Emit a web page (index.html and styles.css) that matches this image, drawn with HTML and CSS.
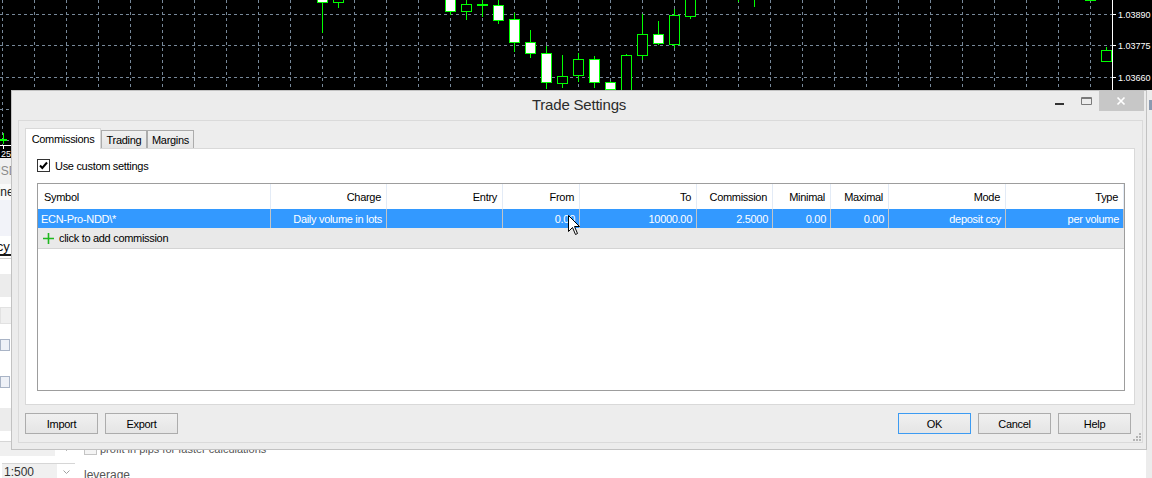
FILE: index.html
```html
<!DOCTYPE html>
<html lang="en">

<head>
    <meta charset="UTF-8">
    <meta name="viewport" content="width=device-width, initial-scale=1.0">
    <title>Trade Settings</title>
    <link rel="stylesheet" href="styles.css">
</head>

<body>
    <div class="terminal">
        <svg class="chart" width="1152" height="158" viewBox="0 0 1152 158">
            <rect width="1152" height="158" fill="#000" />
            <path class="grid-lines" d="M2.5 0V145 M34.5 0V145 M66.5 0V145 M98.5 0V145 M130.5 0V145 M162.5 0V145 M194.5 0V145 M226.5 0V145 M258.5 0V145 M290.5 0V145 M322.5 0V145 M354.5 0V145 M386.5 0V145 M418.5 0V145 M450.5 0V145 M482.5 0V145 M514.5 0V145 M546.5 0V145 M578.5 0V145 M610.5 0V145 M642.5 0V145 M674.5 0V145 M706.5 0V145 M738.5 0V145 M770.5 0V145 M802.5 0V145 M834.5 0V145 M866.5 0V145 M898.5 0V145 M930.5 0V145 M962.5 0V145 M994.5 0V145 M1026.5 0V145 M1058.5 0V145 M1090.5 0V145 M0 14.5H1112 M0 45.5H1112 M0 77.5H1112 M0 109.5H1112 M0 140.5H1112" />

            <!-- candles -->
            <g class="wicks">
                <path d="M322.5 0V33 M338.5 0V8 M450.5 0V15 M466.5 0V20 M482.5 0V17 M498.5 0V24 M514.5 13V52 M530.5 30V58 M546.5 46V89 M562.5 55V88 M578.5 53V82 M594.5 56V88 M610.5 81V90 M626.5 54V90 M642.5 14V60 M658.5 21V45 M674.5 9V48 M690.5 0V19 M738.5 0V2 M754.5 0V7 M1106.5 47V50 M3.5 133V144" />
            </g>
            <g class="bull">
                <rect x="317.5" y="-5" width="10" height="7.5" />
                <rect x="445.5" y="-5" width="10" height="16.5" />
                <rect x="493.5" y="5.5" width="10" height="15" />
                <rect x="509.5" y="19.5" width="10" height="23" />
                <rect x="525.5" y="42.5" width="10" height="11" />
                <rect x="541.5" y="53.5" width="10" height="29" />
                <rect x="589.5" y="59.5" width="10" height="23" />
                <rect x="605.5" y="82.5" width="10" height="7" />
                <rect x="653.5" y="34.5" width="10" height="9" />
                <rect x="1085.5" y="-5" width="10" height="5.5" />
            </g>
            <g class="bear">
                <rect x="333.5" y="-5" width="10" height="7.5" />
                <rect x="461.5" y="4.5" width="10" height="7" />
                <rect x="557.5" y="76.5" width="10" height="7" />
                <rect x="573.5" y="59.5" width="10" height="16" />
                <rect x="621.5" y="55.5" width="10" height="40" />
                <rect x="637.5" y="34.5" width="10" height="21" />
                <rect x="669.5" y="15.5" width="10" height="29" />
                <rect x="685.5" y="-5" width="10" height="21.5" />
                <rect x="1101.5" y="50.5" width="10" height="11" />
            </g>
            <rect x="477" y="4" width="11" height="2" fill="#00ff00" />
            <rect x="0" y="139" width="7" height="2" fill="#00ff00" />

            <!-- axes -->
            <path class="axis" d="M1112.5 0V145.5 M0 145.5H1112.5 M1112 14.5H1116 M1112 45.5H1116 M1112 77.5H1116 M3.5 145V149" />
            <text class="price" x="1118" y="18">1.03890</text>
            <text class="price" x="1118" y="49">1.03775</text>
            <text class="price" x="1118" y="81">1.03660</text>
            <text class="price" x="1" y="157">25 Jan 2017</text>
            <rect x="1146" y="90" width="6" height="68" fill="#ededed" />
            <rect x="1149" y="100" width="3" height="10" fill="#8a9ab0" />
        </svg>

        <div class="lower">
            <div class="lw lw-tabs"><span class="clip-word tab-word">USD</span></div>
            <div class="lw lw-head"><span class="clip-word head-word">Line</span></div>
            <div class="lw lw-tint"></div>
            <div class="lw lw-under"><span class="clip-word under-word">Currency</span></div>
            <div class="lw lw-gap"></div>
            <div class="lw lw-band"></div>
            <div class="lw lw-gap-sm"></div>
            <div class="lw lw-input"><span class="field"></span></div>
            <div class="lw lw-gap-md"></div>
            <div class="lw lw-icon"><span class="mini-cal"></span></div>
            <div class="lw lw-gap-lg"></div>
            <div class="lw lw-icon"><span class="mini-cal"></span></div>
            <div class="lw lw-gap-lg short"></div>
            <div class="lw lw-band"></div>
            <div class="lw lw-gap-sm"></div>
            <div class="lw form-row row-profit">
                <div class="combo disabled">
                    <svg class="chev" width="7" height="4" viewBox="0 0 7 4"><path d="M0.5 0.5L3.5 3.5L6.5 0.5" /></svg>
                </div>
                <span class="bg-check"></span>
                <span class="bg-label">profit in pips for faster calculations</span>
            </div>
            <div class="lw form-row row-leverage">
                <div class="combo">
                    <span class="combo-text">1:500</span>
                    <svg class="chev" width="7" height="4" viewBox="0 0 7 4"><path d="M0.5 0.5L3.5 3.5L6.5 0.5" /></svg>
                </div>
                <span class="bg-label">leverage</span>
            </div>
        </div>

        <div class="dialog">
            <div class="titlebar">
                <div></div>
                <div class="title">Trade Settings</div>
                <div class="win-buttons">
                    <span class="wb">
                        <svg width="26" height="20" viewBox="0 0 26 20"><rect x="8" y="12" width="9" height="2" fill="#333" /></svg>
                    </span>
                    <span class="wb">
                        <svg width="26" height="20" viewBox="0 0 26 20"><path d="M8.5 6.5H18.5V13.5H8.5Z M8.5 7.5H18.5" fill="none" stroke="#7a7a7a" /></svg>
                    </span>
                    <span class="wb wb-close">
                        <svg width="45" height="20" viewBox="0 0 45 20"><path d="M18.5 6.5L25.5 13.5 M25.5 6.5L18.5 13.5" stroke="#fff" stroke-width="1.7" /></svg>
                    </span>
                </div>
            </div>

            <div class="client">
                <div class="tabs">
                    <div class="tab active">Commissions</div>
                    <div class="tab">Trading</div>
                    <div class="tab">Margins</div>
                </div>

                <div class="tab-panel">
                    <label class="custom">
                        <span class="checkbox">
                            <svg width="11" height="11" viewBox="0 0 11 11"><path d="M2 5.5L4.3 8L9 2.5" fill="none" stroke="#000" stroke-width="2" /></svg>
                        </span>
                        Use custom settings
                    </label>

                    <div class="table">
                        <div class="row head">
                            <div class="cell left">Symbol</div>
                            <div class="cell">Charge</div>
                            <div class="cell">Entry</div>
                            <div class="cell">From</div>
                            <div class="cell">To</div>
                            <div class="cell">Commission</div>
                            <div class="cell">Minimal</div>
                            <div class="cell">Maximal</div>
                            <div class="cell">Mode</div>
                            <div class="cell">Type</div>
                        </div>
                        <div class="row selected">
                            <div class="cell left">ECN-Pro-NDD\*</div>
                            <div class="cell">Daily volume in lots</div>
                            <div class="cell"></div>
                            <div class="cell">0.00</div>
                            <div class="cell">10000.00</div>
                            <div class="cell">2.5000</div>
                            <div class="cell">0.00</div>
                            <div class="cell">0.00</div>
                            <div class="cell">deposit ccy</div>
                            <div class="cell">per volume</div>
                        </div>
                        <div class="add-row">
                            <svg width="11" height="11" viewBox="0 0 11 11"><path d="M5.5 0V11 M0 5.5H11" stroke="#1fb81f" stroke-width="1.6" /></svg>
                            click to add commission
                        </div>
                    </div>
                </div>

                <div class="buttons">
                    <button>Import</button>
                    <button>Export</button>
                    <span class="spacer"></span>
                    <button class="default">OK</button>
                    <button>Cancel</button>
                    <button>Help</button>
                </div>

                <svg class="grip" width="8" height="8" viewBox="0 0 8 8">
                    <rect x="6" y="0" width="2" height="2" />
                    <rect x="3" y="3" width="2" height="2" />
                    <rect x="6" y="3" width="2" height="2" />
                    <rect x="0" y="6" width="2" height="2" />
                    <rect x="3" y="6" width="2" height="2" />
                    <rect x="6" y="6" width="2" height="2" />
                </svg>
            </div>
        </div>

        <svg class="cursor" width="13" height="20" viewBox="0 0 13 20">
            <path d="M0.5 0.5V16.5L4.5 12.5L7.5 19.5L9.5 18.5L6.5 11.5H11.5Z" fill="#fff" stroke="#000" />
        </svg>
    </div>
</body>

</html>
```

FILE: styles.css
```css
body {
    margin: 0px;
    font-family: "Liberation Sans", Arial, sans-serif;
    font-size: 11px;
    color: #000;
}

.terminal {
    position: relative;
    display: flex;
    flex-direction: column;
    width: 1152px;
    height: 478px;
    overflow: hidden;
    background-color: #fff;
}

/* chart window behind the dialog */

.chart {
    display: block;
    flex: none;
}

.chart .grid-lines {
    fill: none;
    stroke: #778899;
    stroke-width: 1;
    stroke-dasharray: 3 3;
}

.chart .wicks path {
    fill: none;
    stroke: #00ff00;
    stroke-width: 1;
}

.chart .bull rect {
    fill: #fff;
    stroke: #00ff00;
}

.chart .bear rect {
    fill: #000;
    stroke: #00ff00;
}

.chart .axis {
    fill: none;
    stroke: #fff;
}

.chart .price {
    fill: #fff;
    font-family: "Liberation Sans", Arial, sans-serif;
    font-size: 9px;
}

/* settings form behind the dialog */

.lower {
    display: flex;
    flex: 1;
    flex-direction: column;
    border-right: 6px solid #ececec;
}

.lw {
    flex: none;
    display: flex;
    align-items: center;
    overflow: hidden;
    white-space: nowrap;
}

.clip-word {
    font-size: 12px;
}

.lw-tabs {
    height: 26px;
    background-color: #f0f0f0;
    color: #8a8a8a;
}

.tab-word {
    margin-left: -8px;
}

.lw-head {
    height: 16px;
    background-color: #fafafa;
    color: #222;
}

.head-word {
    margin-left: -9px;
}

.lw-tint {
    height: 36px;
    background-color: #f2f3f9;
}

.lw-under {
    height: 18px;
    border-bottom: 2px solid #1a1a1a;
    color: #111;
    align-items: flex-end;
}

.under-word {
    margin-left: -43px;
    font-size: 13px;
    line-height: 14px;
}

.lw-gap {
    height: 15px;
    border-top: 1px solid #cfcfcf;
    margin-top: 2px;
}

.lw-band {
    height: 23px;
    background-color: #ececec;
}

.lw-gap-sm {
    height: 10px;
}

.lw-gap-md {
    height: 13px;
}

.lw-gap-lg {
    height: 22px;
}

.lw-gap-lg.short {
    height: 19px;
}

.lw-input {
    height: 17px;
}

.lw-input .field {
    width: 80px;
    height: 15px;
    background-color: #f0f0f0;
    border: 1px solid #e2e2e2;
}

.lw-icon {
    height: 15px;
}

.mini-cal {
    width: 8px;
    height: 10px;
    border: 1px solid #a9b4c6;
    background-color: #eef1f7;
}

.form-row {
    gap: 9px;
}

.row-profit {
    height: 17px;
    align-items: flex-start;
}

.row-profit .combo {
    width: 75px;
    height: 15px;
    background-color: #ececec;
}

.row-leverage {
    height: 20px;
    margin-top: 2px;
    padding-left: 2px;
    align-items: flex-end;
}

.combo {
    display: flex;
    align-items: center;
    justify-content: space-between;
    box-sizing: border-box;
    width: 73px;
    height: 17px;
    padding: 0px 5px 0px 2px;
    background: linear-gradient(to right, #f0f0f0 55px, #fff 55px);
    border-top: 1px solid #d6d6d6;
}

.combo.disabled {
    justify-content: flex-end;
}

.combo-text {
    font-size: 12px;
    color: #333;
}

.chev path {
    fill: none;
    stroke: #a0a0a0;
}

.bg-check {
    width: 11px;
    height: 11px;
    margin-left: 0px;
    border: 1px solid #c4c4c4;
    background-color: #f4f4f4;
    margin-top: 1px;
}

.bg-label {
    font-size: 11px;
    color: #555;
    margin-left: -6px;
}

.row-profit .bg-label {
    margin-top: 2px;
}

.row-leverage .bg-label {
    margin-left: 0px;
    font-size: 12px;
    line-height: 12px;
    margin-bottom: -1px;
}

/* dialog window */

.dialog {
    position: absolute;
    left: 11px;
    top: 90px;
    display: flex;
    flex-direction: column;
    box-sizing: border-box;
    width: 1136px;
    height: 360px;
    border: 1px solid #c2c2c2;
    background-color: #ececec;
    letter-spacing: -0.3px;
}

.titlebar {
    display: grid;
    flex: none;
    grid-template-columns: 1fr auto 1fr;
    height: 29px;
}

.title {
    padding-top: 4px;
    font-size: 15px;
    line-height: 20px;
    letter-spacing: -0.2px;
    color: #2b2b2b;
}

.win-buttons {
    display: flex;
    justify-self: end;
    align-items: flex-start;
    margin-right: 2px;
}

.wb {
    display: block;
    height: 20px;
}

.wb svg {
    display: block;
}

.wb-close {
    background-color: #c7c7c7;
}

.client {
    position: relative;
    display: flex;
    flex: 1;
    flex-direction: column;
    margin: 0px 3px 6px 6px;
    padding: 7px 7px 8px 6px;
    border: 1px solid #dadada;
    background-color: #ededed;
}

.tabs {
    display: flex;
    flex: none;
    height: 20px;
    position: relative;
    z-index: 1;
}

.tab {
    box-sizing: border-box;
    height: 18px;
    margin-top: 2px;
    padding-top: 3px;
    text-align: center;
    border: 1px solid #acacac;
    border-bottom: none;
    background: linear-gradient(#f0f0f0, #e5e5e5);
}

.tab:nth-child(2) {
    width: 46px;
}

.tab:nth-child(3) {
    width: 47px;
}

.tab.active {
    width: 76px;
    height: 21px;
    margin-top: 0px;
    padding-top: 4px;
    border-color: #d9d9d9;
    background: #fff;
}

.tab-panel {
    display: flex;
    flex: 1;
    flex-direction: column;
    padding: 10px 9px 13px 11px;
    border: 1px solid #d9d9d9;
    background-color: #fff;
}

.custom {
    display: flex;
    align-items: center;
    gap: 5px;
    height: 13px;
    font-size: 11px;
}

.checkbox {
    display: flex;
    align-items: center;
    justify-content: center;
    box-sizing: border-box;
    width: 13px;
    height: 13px;
    border: 1px solid #333;
    background-color: #fff;
}

.checkbox svg {
    display: block;
}

.table {
    flex: 1;
    margin-top: 11px;
    border: 1px solid #9d9d9d;
    background-color: #fff;
}

.row {
    display: grid;
    grid-template-columns: 233px 116px 116px 77px 117px 76px 58px 58px 117px 1fr;
}

.row.head {
    height: 25px;
}

.row.selected {
    height: 19px;
    background-color: #3399ff;
    color: #fff;
}

.cell {
    display: flex;
    align-items: center;
    justify-content: flex-end;
    overflow: hidden;
    white-space: nowrap;
    padding-right: 5px;
}

.head .cell {
    border-right: 1px solid #e3ebf6;
}

.selected .cell {
    padding-right: 4px;
    border-right: 1px solid #c4c4c4;
}

.cell.left {
    justify-content: flex-start;
    padding-left: 6px;
}

.selected .cell.left {
    padding-left: 3px;
}

.add-row {
    display: flex;
    align-items: center;
    gap: 5px;
    height: 20px;
    padding-left: 5px;
    background-color: #e9e9e9;
    border-bottom: 1px solid #d4d4d4;
}

.add-row svg {
    display: block;
}

.buttons {
    display: flex;
    flex: none;
    gap: 7px;
    margin-top: 8px;
    margin-right: 4px;
}

.spacer {
    flex: 1;
}

button {
    box-sizing: border-box;
    width: 73px;
    height: 21px;
    padding: 0px;
    font-family: "Liberation Sans", Arial, sans-serif;
    font-size: 11px;
    letter-spacing: -0.3px;
    color: #000;
    border: 1px solid #acacac;
    border-radius: 0px;
    background: linear-gradient(#f0f0f0, #e5e5e5);
}

button.default {
    border-color: #3c9bf2;
}

.grip {
    position: absolute;
    right: 1px;
    bottom: 1px;
    fill: #b5b5b5;
}

.cursor {
    position: absolute;
    left: 568px;
    top: 215px;
}
```
